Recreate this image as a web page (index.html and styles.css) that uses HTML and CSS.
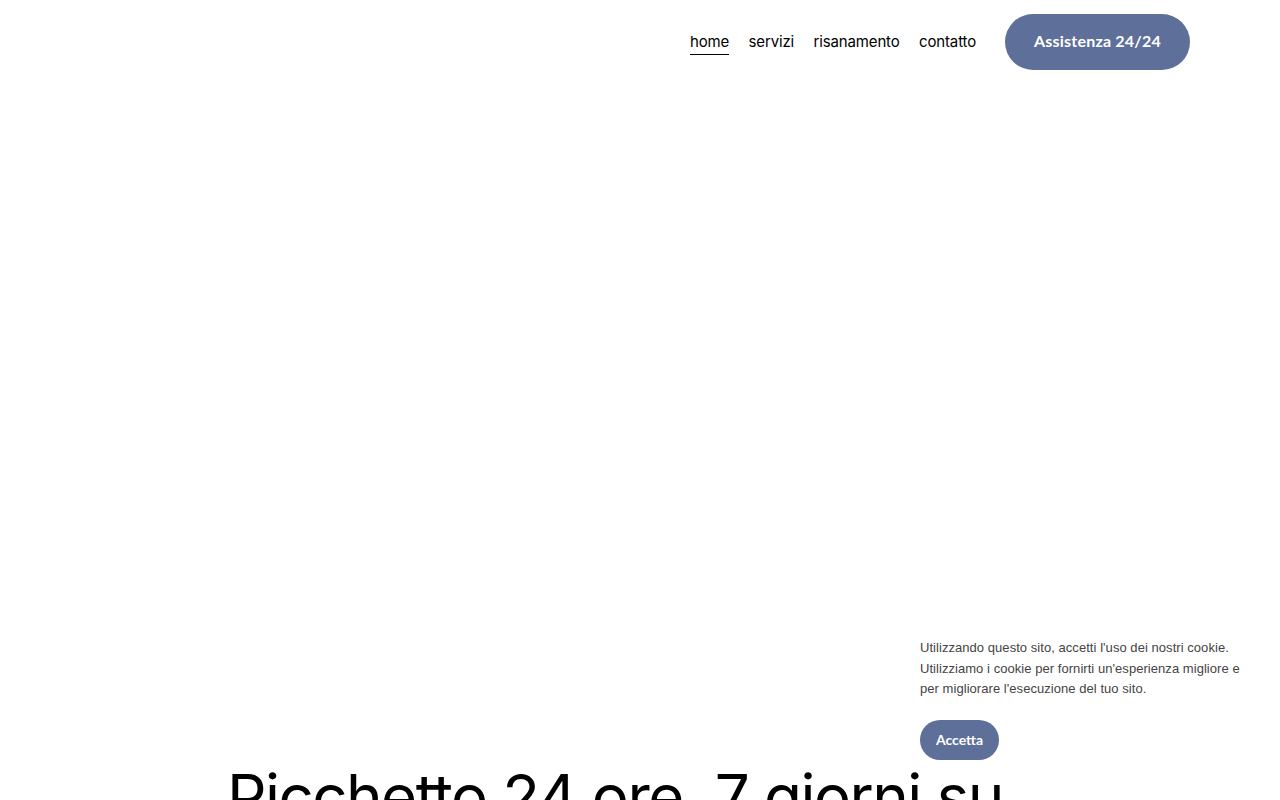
FILE: index.html
```html
<!DOCTYPE html>
<html lang="it">
<head>
<meta charset="utf-8">
<title>Picchetto 24 ore</title>
<link rel="stylesheet" href="styles.css">
</head>
<body>
<header class="site-header">
  <nav class="main-nav">
    <a class="nav-link active" href="#">home</a>
    <a class="nav-link" href="#">servizi</a>
    <a class="nav-link" href="#">risanamento</a>
    <a class="nav-link" href="#">contatto</a>
  </nav>
  <a class="btn-primary" href="#">Assistenza 24/24</a>
</header>
<main class="hero">
  <h1 class="hero-title">Picchetto 24 ore, 7 giorni su 7</h1>
</main>
<div class="cookie-banner">
  <p class="cookie-text">Utilizzando questo sito, accetti l'uso dei nostri cookie. Utilizziamo i cookie per fornirti un'esperienza migliore e per migliorare l'esecuzione del tuo sito.</p>
  <button class="cookie-btn" type="button">Accetta</button>
</div>
</body>
</html>
```

FILE: styles.css
```css
* { box-sizing: border-box; }
html, body { margin: 0; padding: 0; }
body {
  background: #ffffff;
  color: #000;
  font-family: "Inter", "Noto Sans", sans-serif;
  overflow: hidden;
  height: 800px;
}
.site-header {
  display: flex;
  justify-content: flex-end;
  align-items: center;
  padding: 14px 90px 0 90px;
  height: 70px;
}
.main-nav {
  display: flex;
  gap: 19.5px;
  align-items: center;
  margin-right: 29px;
}
.nav-link {
  font-size: 15px;
  color: #000;
  text-decoration: none;
  padding-bottom: 3px;
  border-bottom: 1px solid transparent;
  letter-spacing: -0.15px;
  margin-top: 2px;
}
.nav-link.active { border-bottom-color: #000; }
.btn-primary {
  display: flex;
  align-items: center;
  justify-content: center;
  width: 185px;
  height: 56px;
  border-radius: 28px;
  background: #5e6f9a;
  color: #fff;
  text-decoration: none;
  font-family: "Lato", "Noto Sans", sans-serif;
  font-weight: 700;
  font-size: 16px;
  letter-spacing: 0.2px;
  padding-bottom: 3px;
}
.hero {
  padding: 690px 0 0 227px;
}
.hero-title {
  margin: 0;
  font-weight: 400;
  font-size: 62px;
  line-height: 74px;
  letter-spacing: -1.6px;
  width: 800px;
}
.cookie-banner {
  position: fixed;
  left: 908px;
  top: 630px;
  width: 350px;
  background: #fff;
  padding: 8px 12px 10px 12px;
}
.cookie-text {
  margin: 0 0 20px 0;
  width: 326px;
  font-family: "Liberation Sans", Arial, sans-serif;
  font-size: 13px;
  line-height: 20.5px;
  letter-spacing: 0.05px;
  color: #444;
}
.cookie-btn {
  border: 0;
  width: 79px;
  height: 40px;
  border-radius: 20px;
  background: #5e6f9a;
  color: #fff;
  font-family: "Lato", "Noto Sans", sans-serif;
  font-weight: 700;
  font-size: 14px;
  padding-bottom: 2px;
  cursor: pointer;
}
```
